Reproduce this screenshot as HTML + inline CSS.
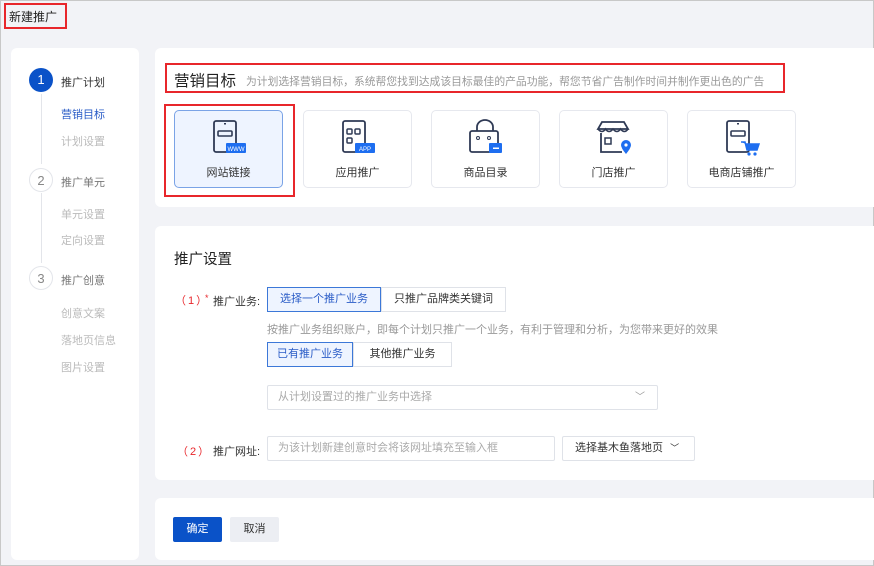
<!DOCTYPE html>
<html><head><meta charset="utf-8"><style>
*{box-sizing:border-box;margin:0;padding:0}
body{width:874px;height:566px;background:#f2f3f7;font-family:"Liberation Sans","Noto Sans CJK SC",sans-serif;position:relative;overflow:hidden;color:#333;border:1px solid #c8c8c8}
.a{position:absolute}
.card{position:absolute;background:#fff;border-radius:6px}
.red{position:absolute;border:2px solid #e8262b}
.step{position:absolute;left:28px;width:24px;height:24px;border-radius:50%;text-align:center;line-height:24px;font-size:13px}
.t{position:absolute;font-size:11px;white-space:nowrap}
.tile{position:absolute;top:109px;width:109px;height:78px;border:1px solid #e6e8ee;border-radius:5px;background:#fff;text-align:center;font-size:11px;color:#333}
.tile svg{position:absolute;left:35px;top:8px}
.tile span{position:absolute;left:0;right:0;top:53px}
.btn{position:absolute;height:25px;line-height:23px;font-size:11px;text-align:center;border:1px solid #dfe2e8;background:#fff;color:#333}
.on{background:#eef4ff;border-color:#3c78d8;color:#2a5cc7}
</style></head><body>
<div class="a" style="left:8px;top:7px;font-size:12px;color:#222">新建推广</div>
<div class="red" style="left:3px;top:2px;width:63px;height:26px"></div>

<div class="card" style="left:10px;top:47px;width:128px;height:512px"></div>
<div class="a" style="left:40px;top:93px;width:1px;height:70px;background:#e3e5ea"></div>
<div class="a" style="left:40px;top:192px;width:1px;height:70px;background:#e3e5ea"></div>
<div class="step" style="top:67px;background:#0a52c8;color:#fff">1</div>
<div class="t" style="left:60px;top:73px;color:#333">推广计划</div>
<div class="t" style="left:60px;top:105px;color:#2a5cc7">营销目标</div>
<div class="t" style="left:60px;top:132px;color:#bbb">计划设置</div>
<div class="step" style="top:167px;border:1px solid #e3e5ea;color:#888">2</div>
<div class="t" style="left:60px;top:173px;color:#777">推广单元</div>
<div class="t" style="left:60px;top:205px;color:#bbb">单元设置</div>
<div class="t" style="left:60px;top:231px;color:#bbb">定向设置</div>
<div class="step" style="top:265px;border:1px solid #e3e5ea;color:#888">3</div>
<div class="t" style="left:60px;top:271px;color:#777">推广创意</div>
<div class="t" style="left:60px;top:304px;color:#bbb">创意文案</div>
<div class="t" style="left:60px;top:331px;color:#bbb">落地页信息</div>
<div class="t" style="left:60px;top:358px;color:#bbb">图片设置</div>

<div class="card" style="left:154px;top:47px;width:730px;height:159px"></div>
<div class="a" style="left:173px;top:68px;font-size:15.5px;color:#222">营销目标</div>
<div class="t" style="left:245px;top:72px;color:#999;font-size:10.8px">为计划选择营销目标，系统帮您找到达成该目标最佳的产品功能，帮您节省广告制作时间并制作更出色的广告</div>
<div class="red" style="left:164px;top:62px;width:620px;height:30px"></div>

<div class="tile" style="left:173px;background:#eef4ff;border-color:#7aa3e6"><svg width="40" height="40" viewBox="0 0 40 40"><rect x="4" y="2" width="22" height="31" rx="2" fill="none" stroke="#2f3a55" stroke-width="1.8"/><rect x="8" y="12" width="14" height="5" rx="1" fill="none" stroke="#2f3a55" stroke-width="1.6"/><rect x="14" y="4" width="2" height="1.5" fill="#2f3a55"/><rect x="16" y="24" width="20" height="10" rx="1" fill="#1e6ef0"/><text x="26" y="32" font-size="6" fill="#fff" text-anchor="middle" font-family="Liberation Sans">WWW</text></svg><span>网站链接</span></div>
<div class="red" style="left:163px;top:103px;width:131px;height:93px"></div>
<div class="tile" style="left:302px"><svg width="40" height="40" viewBox="0 0 40 40"><rect x="4" y="2" width="22" height="31" rx="2" fill="none" stroke="#2f3a55" stroke-width="1.8"/><rect x="8" y="10" width="5" height="5" rx="1" fill="none" stroke="#2f3a55" stroke-width="1.5"/><rect x="16" y="10" width="5" height="5" rx="1" fill="none" stroke="#2f3a55" stroke-width="1.5"/><rect x="8" y="19" width="5" height="5" rx="1" fill="none" stroke="#2f3a55" stroke-width="1.5"/><rect x="16" y="24" width="20" height="10" rx="1" fill="#1e6ef0"/><text x="26" y="32" font-size="6" fill="#fff" text-anchor="middle" font-family="Liberation Sans">APP</text></svg><span>应用推广</span></div>
<div class="tile" style="left:430px"><svg width="40" height="40" viewBox="0 0 40 40"><path d="M10 12 V8 a8 7 0 0 1 16 0 V12" fill="none" stroke="#2f3a55" stroke-width="1.8"/><rect x="3" y="12" width="28" height="21" rx="2" fill="none" stroke="#2f3a55" stroke-width="1.8"/><circle cx="11" cy="19" r="1.5" fill="none" stroke="#2f3a55"/><circle cx="22" cy="19" r="1.5" fill="none" stroke="#2f3a55"/><rect x="22" y="24" width="13" height="10" rx="1" fill="#1e6ef0"/><rect x="26" y="28.5" width="6" height="1.5" fill="#fff"/></svg><span>商品目录</span></div>
<div class="tile" style="left:558px"><svg width="40" height="40" viewBox="0 0 40 40"><path d="M7 3 H29 L33 10 H3 Z" fill="none" stroke="#2f3a55" stroke-width="1.8"/><path d="M3 10 q4 5 7.5 0 q3.5 5 7.5 0 q4 5 7.5 0 q4 5 7.5 0" fill="none" stroke="#2f3a55" stroke-width="1.6"/><path d="M6 14 V33 H27" fill="none" stroke="#2f3a55" stroke-width="1.8"/><rect x="10" y="19" width="6" height="6" fill="none" stroke="#2f3a55" stroke-width="1.5"/><path d="M31 35 q-5 -6 -5 -9 a5 5 0 0 1 10 0 q0 3 -5 9z" fill="#1e6ef0"/><circle cx="31" cy="26" r="1.6" fill="#fff"/></svg><span>门店推广</span></div>
<div class="tile" style="left:686px"><svg width="40" height="40" viewBox="0 0 40 40"><rect x="4" y="2" width="22" height="31" rx="2" fill="none" stroke="#2f3a55" stroke-width="1.8"/><rect x="8" y="12" width="14" height="5" rx="1" fill="none" stroke="#2f3a55" stroke-width="1.6"/><rect x="14" y="4" width="2" height="1.5" fill="#2f3a55"/><path d="M18 23 H22 L24 31 H34 L36 25 H23" fill="#1e6ef0" stroke="#1e6ef0" stroke-width="1.5"/><circle cx="26" cy="35" r="1.6" fill="#1e6ef0"/><circle cx="32" cy="35" r="1.6" fill="#1e6ef0"/></svg><span>电商店铺推广</span></div>

<div class="card" style="left:154px;top:225px;width:730px;height:254px"></div>
<div class="a" style="left:173px;top:247px;font-size:14.5px;color:#222">推广设置</div>
<div class="t" style="left:174px;top:291px;color:#e8262b;letter-spacing:2px">（1）</div>
<div class="t" style="left:204px;top:292px;color:#e8262b;font-size:9px">*</div>
<div class="t" style="left:212px;top:292px;color:#333">推广业务:</div>
<div class="btn on" style="left:266px;top:286px;width:114px">选择一个推广业务</div>
<div class="btn" style="left:380px;top:286px;width:125px">只推广品牌类关键词</div>
<div class="t" style="left:266px;top:320px;color:#999">按推广业务组织账户，即每个计划只推广一个业务，有利于管理和分析，为您带来更好的效果</div>
<div class="btn on" style="left:266px;top:341px;width:86px">已有推广业务</div>
<div class="btn" style="left:352px;top:341px;width:99px">其他推广业务</div>
<div class="btn" style="left:266px;top:384px;width:391px;text-align:left;padding-left:10px;color:#aaa;border-radius:2px">从计划设置过的推广业务中选择<span style="position:absolute;right:12px;top:0;color:#999;font-size:10px">﹀</span></div>
<div class="t" style="left:176px;top:442px;color:#e8262b;letter-spacing:2px">（2）</div>
<div class="t" style="left:212px;top:442px;color:#333">推广网址:</div>
<div class="btn" style="left:266px;top:435px;width:288px;text-align:left;padding-left:10px;color:#aaa;border-radius:2px">为该计划新建创意时会将该网址填充至输入框</div>
<div class="btn" style="left:561px;top:435px;width:133px;text-align:left;padding-left:12px;border-radius:2px">选择基木鱼落地页 <span style="font-size:9px;margin-left:4px">﹀</span></div>

<div class="card" style="left:154px;top:497px;width:730px;height:62px"></div>
<div class="btn" style="left:172px;top:516px;width:49px;background:#0a52c8;border-color:#0a52c8;color:#fff;border-radius:2px">确定</div>
<div class="btn" style="left:229px;top:516px;width:49px;background:#eceef3;border-color:#eceef3;border-radius:2px">取消</div>
</body></html>
